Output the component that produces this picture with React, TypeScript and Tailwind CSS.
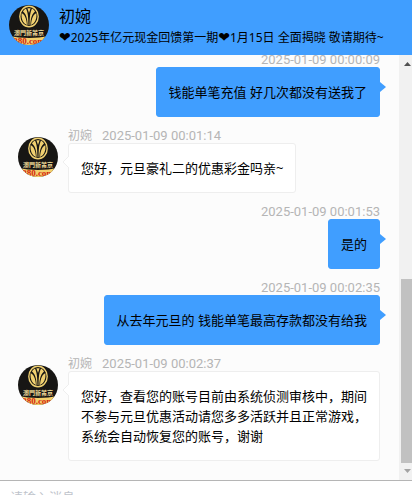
import { useId } from 'react';
import clsx from 'clsx';

interface Message {
  id: number;
  own: boolean;
  time: string;
  text: string;
}

const AGENT_NAME = '初婉';

const MESSAGES: Message[] = [
  { id: 1, own: true,  time: '2025-01-09 00:00:09', text: '钱能单笔充值 好几次都没有送我了' },
  { id: 2, own: false, time: '2025-01-09 00:01:14', text: '您好，元旦豪礼二的优惠彩金吗亲~' },
  { id: 3, own: true,  time: '2025-01-09 00:01:53', text: '是的' },
  { id: 4, own: true,  time: '2025-01-09 00:02:35', text: '从去年元旦的 钱能单笔最高存款都没有给我' },
  {
    id: 5,
    own: false,
    time: '2025-01-09 00:02:37',
    text: '您好，查看您的账号目前由系统侦测审核中，期间不参与元旦优惠活动请您多多活跃并且正常游戏，系统会自动恢复您的账号，谢谢',
  },
];

function Avatar() {
  const clipId = useId();
  return (
    <svg viewBox="0 0 40 40" className="size-10 shrink-0" role="img" aria-label={AGENT_NAME}>
      <clipPath id={clipId}>
        <circle cx="20" cy="20" r="20" />
      </clipPath>
      <g clipPath={`url(#${clipId})`}>
        <rect width="40" height="40" fill="#171614" />
        <ellipse cx="20" cy="11.5" rx="9.2" ry="10.2" fill="#171614" stroke="#f0d070" strokeWidth="1.4" />
        <path
          d="M12.600 8C15.500 9.500 17.500 13 18 20C14.500 18.500 12 14.500 12.600 8zM27.400 8C24.500 9.500 22.500 13 22 20C25.500 18.500 28 14.500 27.400 8z"
          fill="#f0d070"
        />
        <path
          d="M17 3.500C18.800 7 19.400 12 19.400 20H18.600C18.400 14 17.500 9.500 14 6.500C14.800 5 15.800 4 17 3.500zM23 3.500C21.200 7 20.600 12 20.600 20H21.400C21.600 14 22.500 9.500 26 6.500C25.200 5 24.200 4 23 3.500z"
          fill="#f0d070"
        />
        <path d="M18.400 3.200h3.200L20 8z" fill="#f0d070" />
        <text
          x="20"
          y="30"
          textAnchor="middle"
          fontSize="6"
          fontWeight="700"
          fill="#f0dc9a"
          fontFamily="'Noto Sans CJK TC', sans-serif"
        >
          澳門新莆京
        </text>
        <path d="M0 31Q20 35 40 31V40H0z" fill="#f3cf6b" />
        <text
          x="20"
          y="39"
          textAnchor="middle"
          fontSize="9"
          fontWeight="700"
          fill="#d3230f"
          fontFamily="'Liberation Serif', serif"
        >
          380.com
        </text>
      </g>
    </svg>
  );
}

function Heart() {
  return <span className="font-['DejaVu_Sans'] text-sm leading-4">❤</span>;
}

function ChatHeader() {
  return (
    <header className="flex shrink-0 gap-2.5 bg-[#409eff] pt-[5px] pb-1.5 pl-[9px]">
      <Avatar />
      <div className="min-w-0">
        <h1 className="text-base leading-[22px]">{AGENT_NAME}</h1>
        <p className="text-xs leading-[22px] whitespace-nowrap">
          <Heart />2025年亿元现金回馈第一期<Heart />1月15日 全面揭晓 敬请期待~
        </p>
      </div>
    </header>
  );
}

function Bubble({ own, text }: { own: boolean; text: string }) {
  return (
    <div
      className={clsx(
        'relative rounded-[3px] border px-3 py-3.5 text-[13px] leading-5',
        own ? 'border-[#409eff] bg-[#409eff]' : 'border-[#eeeeee] bg-white',
      )}
    >
      {own ? (
        <svg viewBox="0 0 6 10" className="absolute -right-[7px] top-3.5 h-2.5 w-1.5" aria-hidden="true">
          <path d="M0 0L6 5L0 10z" fill="#409eff" />
        </svg>
      ) : (
        <svg viewBox="0 0 7 12" className="absolute -left-[7px] top-3 h-3 w-[7px]" aria-hidden="true">
          <path d="M7 0L1 6L7 12" fill="#ffffff" stroke="#eeeeee" />
        </svg>
      )}
      {text}
    </div>
  );
}

function MessageRow({ message }: { message: Message }) {
  const { own, time, text } = message;
  return (
    <li className={clsx('flex shrink-0 gap-2.5', own && 'justify-end')}>
      {!own && (
        <div className="pt-2.5">
          <Avatar />
        </div>
      )}
      <div className={clsx('flex min-w-0 flex-col', own ? 'items-end' : 'items-start')}>
        <div className="flex gap-2.5 pt-0.5 text-xs leading-[14px] text-[#b5b5b5]">
          {!own && <span>{AGENT_NAME}</span>}
          <time className="font-[Roboto] text-[13px] leading-[14px]">{time}</time>
        </div>
        <Bubble own={own} text={text} />
      </div>
    </li>
  );
}

function ScrollTrack() {
  return (
    <div className="flex w-[13px] shrink-0 flex-col bg-[#f1f1f1] pl-0.5" aria-hidden="true">
      <svg viewBox="0 0 11 17" className="h-[17px] w-[11px] shrink-0">
        <path d="M3 11h7L6.500 7z" fill="#505050" />
      </svg>
      <div className="flex flex-1 flex-col justify-end">
        <div className="h-[47%] bg-[#c1c1c1]" />
      </div>
      <svg viewBox="0 0 11 17" className="h-[17px] w-[11px] shrink-0">
        <path d="M3 6h7L6.500 10z" fill="#a3a3a3" />
      </svg>
    </div>
  );
}

export default function App() {
  return (
    <div className="flex h-screen flex-col overflow-hidden bg-white font-['Noto_Sans','Noto_Sans_CJK_SC',sans-serif] text-black">
      <ChatHeader />
      <main className="flex min-h-0 flex-1 border-b border-[#b5b5b5] bg-[#fcfcfc]">
        <ul className="flex min-w-0 flex-1 flex-col justify-end gap-2.5 overflow-hidden pr-[19px] pb-[19px] pl-[18px]">
          {MESSAGES.map((message) => (
            <MessageRow key={message.id} message={message} />
          ))}
        </ul>
        <ScrollTrack />
      </main>
      <footer className="h-3.5 shrink-0 overflow-hidden">
        <textarea
          aria-label="请输入消息"
          placeholder="请输入消息"
          className="block h-20 w-full resize-none px-2.5 pt-1.5 text-[13px] leading-5 outline-none placeholder:text-[#c0c4cc]"
        />
      </footer>
    </div>
  );
}
